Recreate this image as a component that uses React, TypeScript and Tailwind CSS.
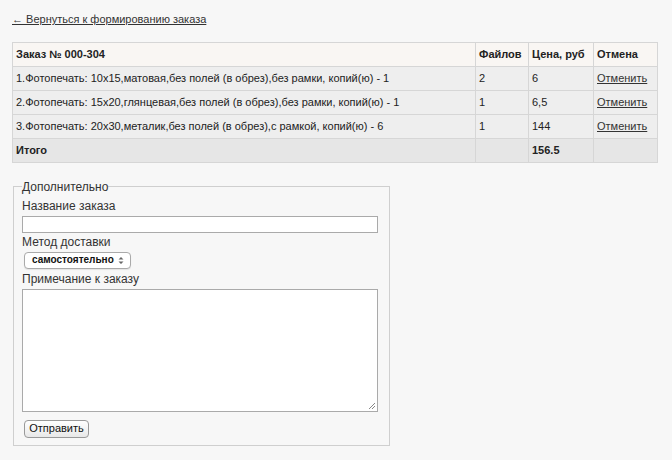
const rows = [
  { name: "1.Фотопечать: 10x15,матовая,без полей (в обрез),без рамки, копий(ю) - 1", files: "2", price: "6" },
  { name: "2.Фотопечать: 15x20,глянцевая,без полей (в обрез),без рамки, копий(ю) - 1", files: "1", price: "6,5" },
  { name: "3.Фотопечать: 20x30,металик,без полей (в обрез),с рамкой, копий(ю) - 6", files: "1", price: "144" },
];

const cell = "border border-[#d6d6d6] px-[3px] h-[24px] align-middle";

export default function App() {
  return (
    <div className="min-h-[460px] w-[672px] bg-[#f7f7f7] px-[12px] pt-[11px] font-['Liberation_Sans',Arial,sans-serif] text-[11px] text-[#222]">
      <a href="#" className="text-[#333] underline underline-offset-1 leading-[14px]">
        ← Вернуться к формированию заказа
      </a>

      <table className="mt-[14px] w-[646px] border-collapse">
        <thead>
          <tr className="bg-[#f9f6f3]">
            <th className={`${cell} w-[463px] text-left font-bold`}>Заказ № 000-304</th>
            <th className={`${cell} w-[53px] text-left font-bold`}>Файлов</th>
            <th className={`${cell} w-[65px] text-left font-bold`}>Цена, руб</th>
            <th className={`${cell} text-left font-bold`}>Отмена</th>
          </tr>
        </thead>
        <tbody>
          {rows.map((r) => (
            <tr key={r.name} className="bg-[#eeeeee]">
              <td className={cell}>{r.name}</td>
              <td className={cell}>{r.files}</td>
              <td className={cell}>{r.price}</td>
              <td className={cell}>
                <a href="#" className="text-[#333] underline">Отменить</a>
              </td>
            </tr>
          ))}
          <tr className="bg-[#e6e6e6]">
            <td className={`${cell} font-bold`}>Итого</td>
            <td className={cell}></td>
            <td className={`${cell} font-bold`}>156.5</td>
            <td className={cell}></td>
          </tr>
        </tbody>
      </table>

      <fieldset className="mt-[17px] ml-px w-[377px] border border-[#cfcfcf] pl-[8px] pr-[11px] pb-[7px]">
        <legend className="px-0 text-[#333] text-[12px] leading-[14px]">Дополнительно</legend>
        <div className="flex flex-col items-start text-[12px] text-[#333]">
          <label className="mt-[5px] leading-[14px]">Название заказа</label>
          <input className="mt-[3px] h-[17px] w-[356px] border border-[#aaa] bg-white" />
          <label className="mt-[2px] leading-[14px]">Метод доставки</label>
          <div className="mt-[3px] ml-[2px] flex h-[17px] w-[107px] items-center rounded-[4px] border border-[#aaa] bg-white pl-[7px] pr-[6px] shadow-[0_1px_1px_rgba(0,0,0,0.08)]">
            <span className="text-[10px] font-bold text-[#111] leading-none">самостоятельно</span>
            <svg className="ml-auto" width="6" height="9" viewBox="0 0 6 9">
              <path d="M0.5 3.5 L3 1 L5.5 3.5Z M0.5 5.5 L3 8 L5.5 5.5Z" fill="#666" />
            </svg>
          </div>
          <label className="mt-[3px] leading-[14px]">Примечание к заказу</label>
          <div className="relative mt-[3px] h-[123px] w-[356px] border border-[#aaa] bg-white">
            <svg className="absolute right-[1px] bottom-[1px]" width="8" height="8" viewBox="0 0 8 8">
              <path d="M7 1 L1 7 M7 4 L4 7" stroke="#888" strokeWidth="1" />
            </svg>
          </div>
          <button className="mt-[8px] ml-[2px] h-[18px] w-[65px] rounded-[4px] border border-[#999] bg-gradient-to-b from-white to-[#e8e8e8] text-[11px] text-[#111] leading-none">
            Отправить
          </button>
        </div>
      </fieldset>
    </div>
  );
}
